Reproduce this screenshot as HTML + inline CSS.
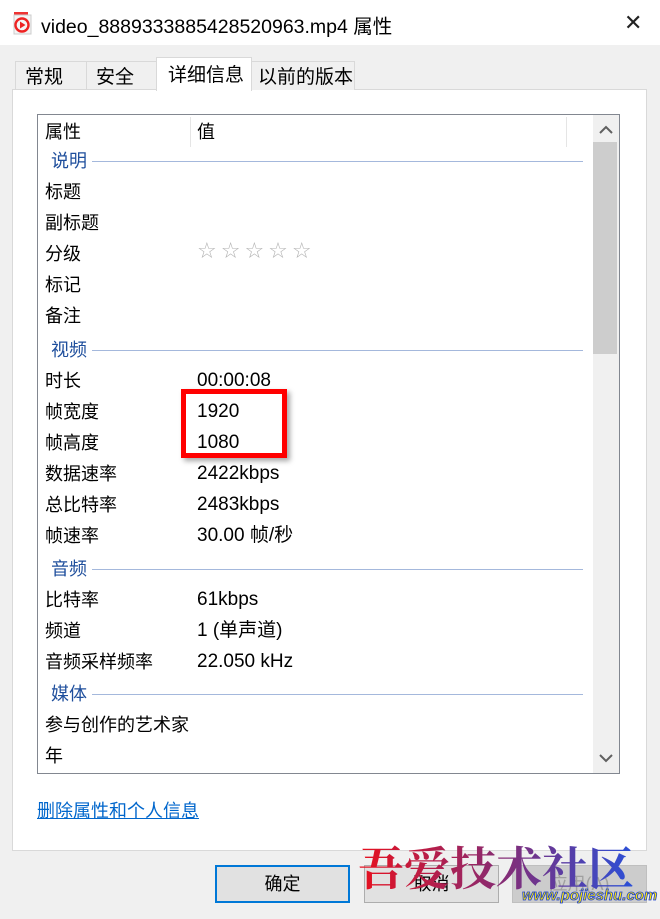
<!DOCTYPE html>
<html><head><meta charset="utf-8"><style>
*{margin:0;padding:0;box-sizing:border-box}
body{width:660px;height:919px;background:#f0f0f0;font-family:"Liberation Sans","Noto Sans CJK SC",sans-serif;position:relative;overflow:hidden;color:#000}
.title{position:absolute;left:0;top:0;width:660px;height:45px;background:#fff}
.title .t{position:absolute;left:41px;top:10px;font-size:19.5px;white-space:nowrap}
.close{position:absolute;left:624px;top:10px;font-size:22px;color:#222}
.tab{position:absolute;top:61px;height:29px;border:1px solid #d9d9d9;border-bottom:none;background:#f0f0f0;font-size:19px;padding-left:9px;line-height:31px;white-space:nowrap}
.panel{position:absolute;left:12px;top:89px;width:635px;height:762px;background:#fff;border:1px solid #d9d9d9}
.list{position:absolute;left:37px;top:114px;width:583px;height:660px;border:1px solid #828790;background:#fff;overflow:hidden}
.r{position:absolute;left:7px;font-size:18px;line-height:20px;white-space:nowrap}
.v{position:absolute;left:159px;font-size:19px;line-height:20px;white-space:nowrap}
.s{position:absolute;left:13px;font-size:18px;color:#1e4e9c;line-height:20px}
.ln{position:absolute;height:1px;background:#a4b8dc;right:36px}
.sb{position:absolute;left:555px;top:0;width:26px;height:658px;background:#f0f0f0}
.btn{position:absolute;top:865px;width:135px;height:38px;background:#e1e1e1;border:1px solid #adadad;font-size:18px;text-align:center;line-height:36px}
</style></head><body>
<div class="title">
<svg style="position:absolute;left:12px;top:11px" width="22" height="24" viewBox="0 0 22 24"><rect x="2" y="1" width="14" height="5" fill="#e33"/><rect x="2" y="4" width="17" height="19" fill="#f4f4f4" stroke="#ccc"/><circle cx="10" cy="14" r="6.5" fill="none" stroke="#e22" stroke-width="2.4"/><path d="M8 10.5 L13.5 14 L8 17.5Z" fill="#e22"/></svg>
<div class="t">video_8889333885428520963.mp4 属性</div>
<div class="close">✕</div>
</div>
<div class="tab" style="left:15px;width:72px">常规</div>
<div class="tab" style="left:86px;width:71px">安全</div>
<div class="panel"></div>
<div class="tab" style="left:156px;top:57px;width:96px;height:34px;background:#fff;z-index:2;line-height:36px;padding-left:11px">详细信息</div>
<div class="tab" style="left:251px;width:104px;padding-left:6px">以前的版本</div>
<div class="list">
<div class="r" style="top:7px">属性</div>
<div style="position:absolute;left:152px;top:2px;width:1px;height:30px;background:#e5e5e5"></div>
<div style="position:absolute;left:528px;top:2px;width:1px;height:30px;background:#e5e5e5"></div>
<div class="v" style="top:7px;font-size:18px">值</div>
<div class="s" style="top:36px">说明</div><div class="ln" style="left:54px;top:46px"></div>
<div class="r" style="top:67px">标题</div>
<div class="r" style="top:98px">副标题</div>
<div class="r" style="top:129px">分级</div>
<div class="v" style="top:127px;color:#b4b4b4;font-size:22px;letter-spacing:4px;font-family:'DejaVu Sans'">☆☆☆☆☆</div>
<div class="r" style="top:160px">标记</div>
<div class="r" style="top:191px">备注</div>
<div class="s" style="top:225px">视频</div><div class="ln" style="left:54px;top:235px"></div>
<div class="r" style="top:256px">时长</div><div class="v" style="top:256px">00:00:08</div>
<div class="r" style="top:287px">帧宽度</div><div class="v" style="top:287px">1920</div>
<div class="r" style="top:318px">帧高度</div><div class="v" style="top:318px">1080</div>
<div class="r" style="top:349px">数据速率</div><div class="v" style="top:349px">2422kbps</div>
<div class="r" style="top:380px">总比特率</div><div class="v" style="top:380px">2483kbps</div>
<div class="r" style="top:411px">帧速率</div><div class="v" style="top:411px">30.00 帧/秒</div>
<div class="s" style="top:444px">音频</div><div class="ln" style="left:54px;top:454px"></div>
<div class="r" style="top:475px">比特率</div><div class="v" style="top:475px">61kbps</div>
<div class="r" style="top:506px">频道</div><div class="v" style="top:506px">1 (单声道)</div>
<div class="r" style="top:537px">音频采样频率</div><div class="v" style="top:537px">22.050 kHz</div>
<div class="s" style="top:569px">媒体</div><div class="ln" style="left:54px;top:579px"></div>
<div class="r" style="top:600px">参与创作的艺术家</div>
<div class="r" style="top:631px">年</div>
<div class="sb">
<svg style="position:absolute;left:6px;top:10px" width="14" height="10"><path d="M1 8 L7 2 L13 8" fill="none" stroke="#606060" stroke-width="2"/></svg>
<div style="position:absolute;left:0;top:27px;width:24px;height:212px;background:#cdcdcd"></div>
<svg style="position:absolute;left:6px;top:638px" width="14" height="10"><path d="M1 2 L7 8 L13 2" fill="none" stroke="#606060" stroke-width="2"/></svg>
</div>
</div>
<div style="position:absolute;left:181px;top:389px;width:106px;height:69px;border:5px solid #f00;box-shadow:3px 3px 5px rgba(0,0,0,.35)"></div>
<div style="position:absolute;left:37px;top:797px;font-size:18px;color:#0066cc;text-decoration:underline;white-space:nowrap">删除属性和个人信息</div>
<div class="btn" style="left:215px;border:2px solid #0078d7;line-height:34px">确定</div>
<div class="btn" style="left:364px">取消</div>
<div class="btn" style="left:512px;color:#a0a0a0;background:#cccccc;border-color:#bfbfbf">应用(A)</div>
<div style="position:absolute;left:358px;top:840px;font-size:46px;font-weight:bold;font-family:'Noto Serif CJK SC',serif;white-space:nowrap;background:linear-gradient(90deg,#e8101e,#8a2a70 50%,#2a50d8);-webkit-background-clip:text;color:transparent;line-height:52px">吾爱技术社区</div>
<div style="position:absolute;left:522px;top:887px;font-size:15px;font-weight:bold;font-style:italic;color:#ffe600;-webkit-text-stroke:0.8px #1a3fd0;font-family:'Liberation Sans',sans-serif;white-space:nowrap">www.pojieshu.com</div>
</body></html>
